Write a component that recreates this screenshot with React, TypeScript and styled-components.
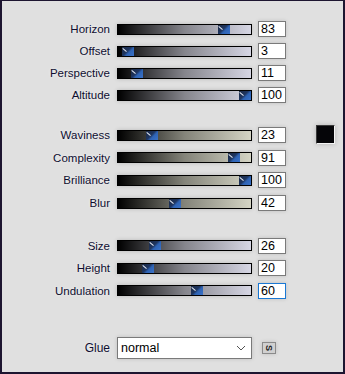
import React from "react";
import styled, { createGlobalStyle } from "styled-components";

const Global = createGlobalStyle`
  html, body { margin: 0; padding: 0; background: #e0e0e0; }
  * { box-sizing: border-box; }
`;

const Panel = styled.div`
  width: 345px;
  height: 374px;
  background: #e0e0e0;
  border: 2px solid #1d1530;
  border-top-width: 1px;
  padding-top: 17px;
  font-family: "Liberation Sans", Arial, sans-serif;
  display: flex;
  flex-direction: column;
`;

const Group = styled.div<{ $gap: number }>`
  display: flex;
  align-items: flex-start;
  margin-top: ${(p) => p.$gap}px;
`;

const Rows = styled.div<{ $rowH: number }>`
  display: grid;
  grid-template-columns: 108px 142px 34px;
  grid-auto-rows: ${(p) => p.$rowH}px;
  align-items: center;
`;

const Label = styled.div`
  font-size: 11.5px;
  color: #0e0e30;
  text-align: right;
  text-shadow: 0 0 3px rgba(255, 255, 255, 0.7);
`;

const Track = styled.div<{ $tone: "lav" | "beige" }>`
  position: relative;
  margin-left: 7px;
  width: 135px;
  height: 11px;
  border: 1px solid #000;
  background: linear-gradient(
    to right,
    #000 0%,
    ${(p) => (p.$tone === "lav" ? "#85858c" : "#84847a")} 50%,
    ${(p) => (p.$tone === "lav" ? "#d6d6e4" : "#d4d4c4")} 100%
  );
  box-shadow: 0 0 4px rgba(0, 0, 0, 0.18);
`;

const Thumb = styled.div`
  position: absolute;
  top: 0;
  width: 12px;
  height: 9px;
  background: linear-gradient(135deg, #1c2a44 0%, #1e3560 45%, #2e63b4 60%, #3a72c8 100%);
  &::after {
    content: "";
    position: absolute;
    left: 1px;
    top: 1px;
    width: 5px;
    height: 1px;
    background: #e8eef8;
    transform: rotate(40deg);
    transform-origin: left top;
  }
`;

const NumBox = styled.div<{ $focus?: boolean }>`
  margin-left: 6px;
  width: 28px;
  height: 16px;
  background: #fff;
  border: 1px solid ${(p) => (p.$focus ? "#1a78d4" : "#7a7a7a")};
  font-size: 12.5px;
  line-height: 14px;
  color: #000;
  padding-left: 2px;
  box-shadow: 0 0 4px rgba(0, 0, 0, 0.15);
`;

const Swatch = styled.div`
  margin-left: 30px;
  margin-top: 1px;
  width: 19px;
  height: 19px;
  background: #050508;
  border: 1px solid #3a3a3a;
  border-right-color: #f4f4f4;
  border-bottom-color: #f4f4f4;
  box-shadow: 0 0 5px rgba(0, 0, 0, 0.2);
`;

const GlueRow = styled.div`
  display: flex;
  align-items: center;
  margin-top: 35px;
`;

const GlueLabel = styled(Label)`
  width: 108px;
  font-size: 12px;
`;

const Select = styled.div`
  margin-left: 7px;
  width: 135px;
  height: 22px;
  background: #fff;
  border: 1px solid #7a7a7a;
  display: flex;
  align-items: center;
  justify-content: space-between;
  padding: 0 5px 0 3px;
  font-size: 12.5px;
  color: #000;
  box-shadow: 0 0 4px rgba(0, 0, 0, 0.15);
`;

const SButton = styled.div`
  margin-left: 10px;
  width: 14px;
  height: 12px;
  background: #d0d0d0;
  border: 1px solid #8a8a8a;
  display: flex;
  align-items: center;
  justify-content: center;
  font-size: 9px;
  font-weight: bold;
  color: #222;
  box-shadow: 0 0 4px rgba(0, 0, 0, 0.15);
  span { display: inline-block; transform: rotate(90deg); }
`;

type Item = { label: string; value: number; focus?: boolean };

const Slider = ({ item, tone }: { item: Item; tone: "lav" | "beige" }) => (
  <>
    <Label>{item.label}</Label>
    <Track $tone={tone}>
      <Thumb style={{ left: `${(item.value / 100) * 121}px` }} />
    </Track>
    <NumBox $focus={item.focus}>{item.value}</NumBox>
  </>
);

const g1: Item[] = [
  { label: "Horizon", value: 83 },
  { label: "Offset", value: 3 },
  { label: "Perspective", value: 11 },
  { label: "Altitude", value: 100 },
];
const g2: Item[] = [
  { label: "Waviness", value: 23 },
  { label: "Complexity", value: 91 },
  { label: "Brilliance", value: 100 },
  { label: "Blur", value: 42 },
];
const g3: Item[] = [
  { label: "Size", value: 26 },
  { label: "Height", value: 20 },
  { label: "Undulation", value: 60, focus: true },
];

export default function App() {
  return (
    <>
      <Global />
      <Panel>
        <Group $gap={0}>
          <Rows $rowH={22}>
            {g1.map((it) => (
              <Slider key={it.label} item={it} tone="lav" />
            ))}
          </Rows>
        </Group>
        <Group $gap={18}>
          <Rows $rowH={22.6}>
            {g2.map((it) => (
              <Slider key={it.label} item={it} tone="beige" />
            ))}
          </Rows>
          <Swatch />
        </Group>
        <Group $gap={20}>
          <Rows $rowH={22.6}>
            {g3.map((it) => (
              <Slider key={it.label} item={it} tone="lav" />
            ))}
          </Rows>
        </Group>
        <GlueRow>
          <GlueLabel>Glue</GlueLabel>
          <Select>
            <span>normal</span>
            <svg width="10" height="6" viewBox="0 0 10 6">
              <path d="M1 1 L5 5 L9 1" fill="none" stroke="#555" strokeWidth="1" />
            </svg>
          </Select>
          <SButton>
            <span>S</span>
          </SButton>
        </GlueRow>
      </Panel>
    </>
  );
}
